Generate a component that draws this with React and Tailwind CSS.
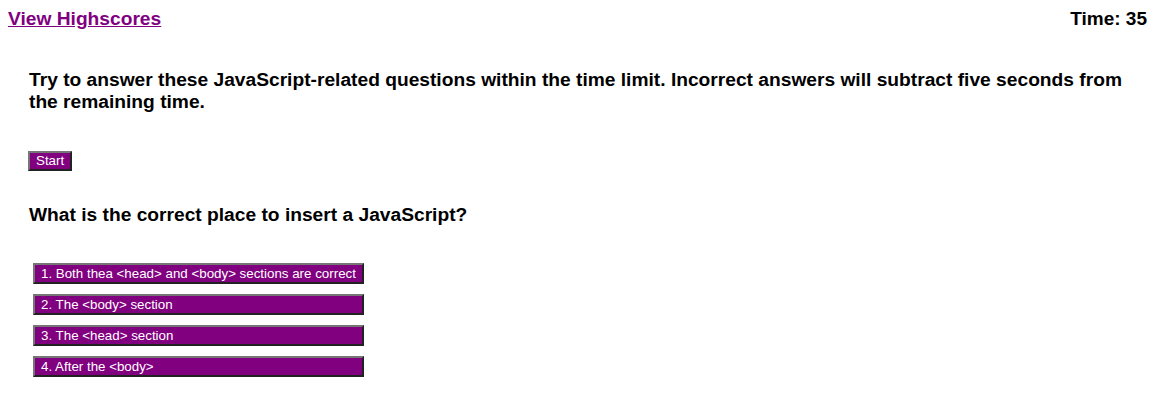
export default function App() {
  const options = [
    "1. Both thea <head> and <body> sections are correct",
    "2. The <body> section",
    "3. The <head> section",
    "4. After the <body>",
  ];
  const btn =
    "bg-[#800080] text-white border-2 border-t-[#767676] border-l-[#767676] border-b-[#222] border-r-[#222] text-left leading-none whitespace-nowrap";
  return (
    <div className="min-h-[411px] w-[1157px] bg-white text-black py-2 pl-2 pr-[10px]" style={{ fontFamily: '"Liberation Sans", Arial, sans-serif' }}>
      <div className="flex justify-between items-start">
        <a href="#" className="text-[#800080] underline font-bold text-[19.2px] leading-[22px]">View Highscores</a>
        <div className="font-bold text-[19px] leading-[22px]">Time: 35</div>
      </div>
      <div className="pl-[21px] pr-[18px]">
        <h3 className="font-bold text-[19.2px] leading-[22px] mt-[39px]">
          Try to answer these JavaScript-related questions within the time limit. Incorrect answers will subtract five seconds from the remaining time.
        </h3>
        <button className={btn + " mt-[38px] ml-[-1px] h-[20px] px-[6px] text-[13.33px] block"}>Start</button>
        <h3 className="font-bold text-[19.2px] leading-[22px] mt-[33px]">What is the correct place to insert a JavaScript?</h3>
        <div className="mt-[37px] ml-[4px] flex flex-col gap-[10px]">
          {options.map((o) => (
            <button key={o} className={btn + " w-[331px] h-[21px] pl-[6px] pr-[2px] text-[13.33px]"}>{o}</button>
          ))}
        </div>
      </div>
    </div>
  );
}
